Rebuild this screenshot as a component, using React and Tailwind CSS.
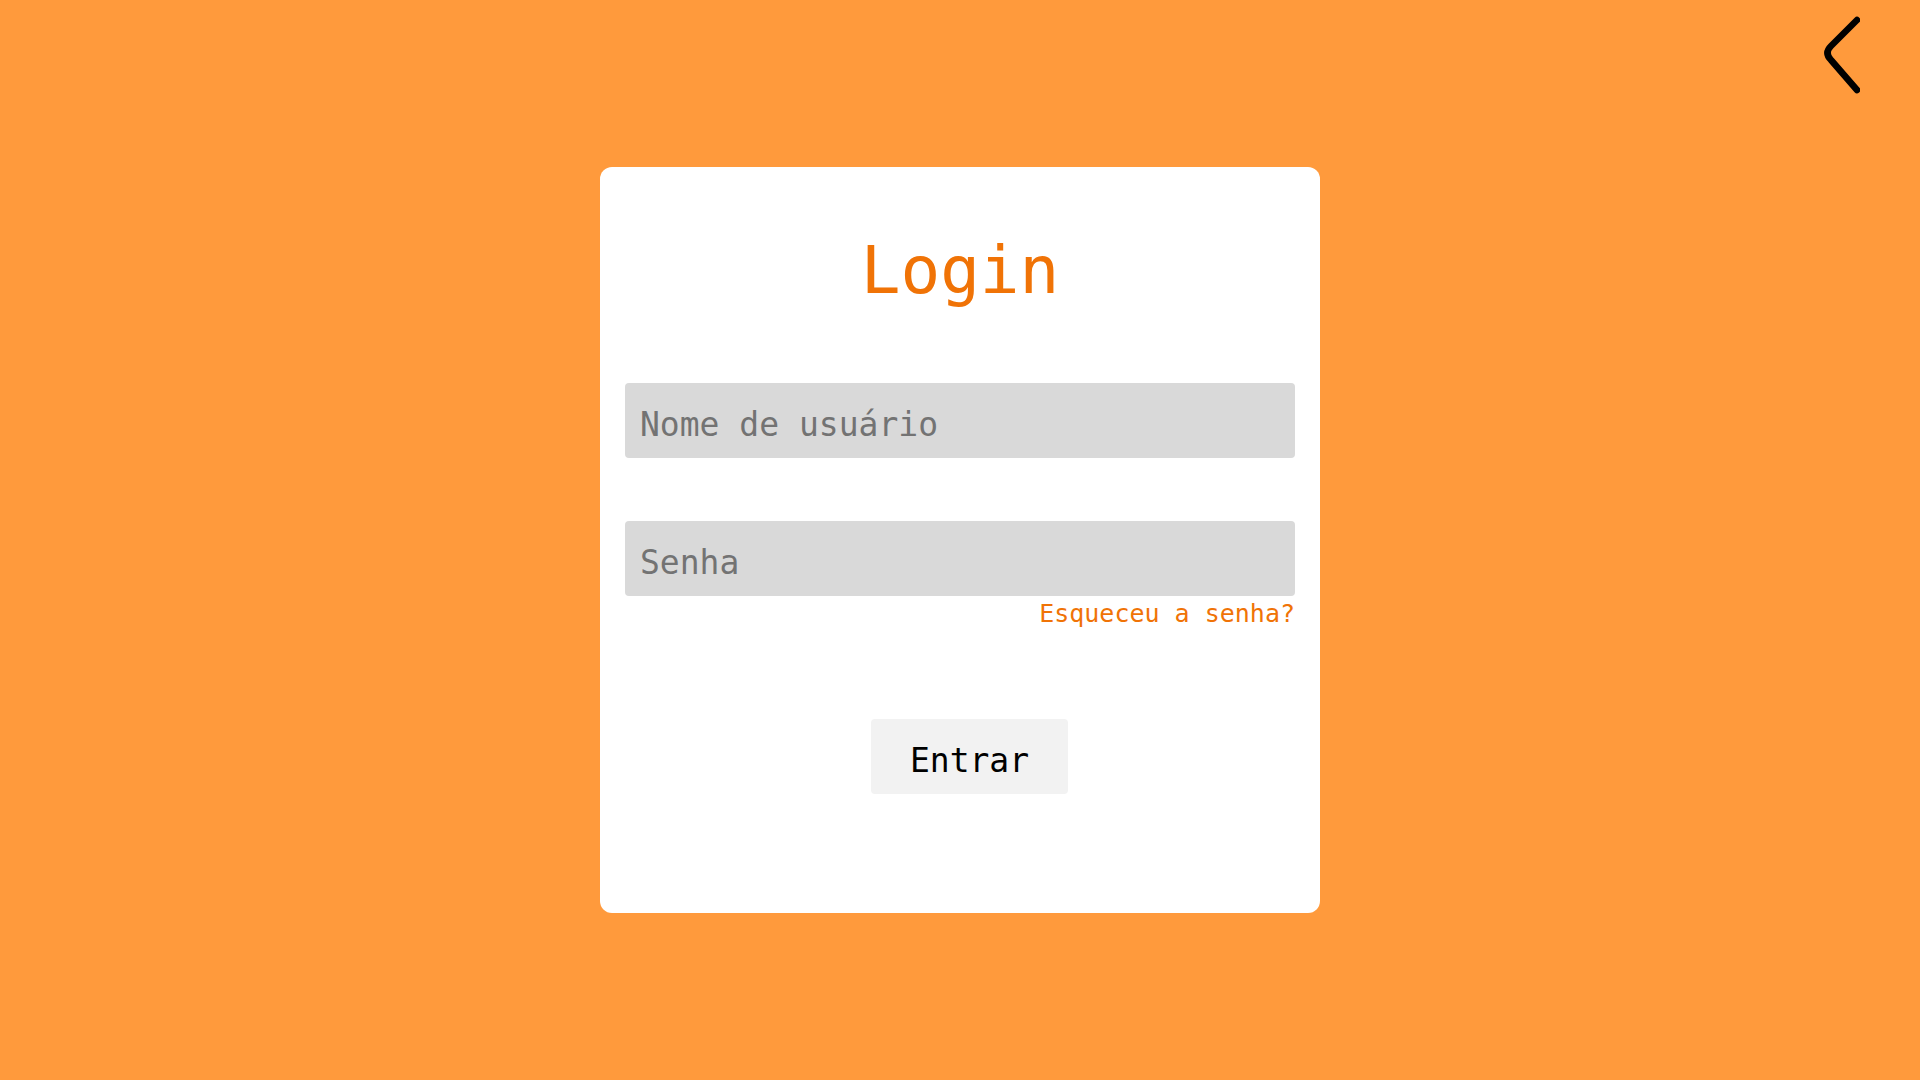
import React from "react";

export default function App() {
  return (
    <div
      className="w-full h-screen bg-[#ff9a3c] flex flex-col overflow-hidden"
      style={{ fontFamily: '"DejaVu Sans Mono", "Liberation Mono", monospace' }}
    >
      <div className="flex justify-end pt-[16px] pr-[60px]">
        <button className="w-[40px] h-[80px] flex items-center justify-center" aria-label="Voltar">
          <svg width="40" height="80" viewBox="0 0 40 80" fill="none">
            <path
              d="M37 4 L11 30 Q4 37 11 44 L37 74"
              stroke="#000"
              strokeWidth="6.5"
              strokeLinecap="round"
              strokeLinejoin="round"
            />
          </svg>
        </button>
      </div>
      <div className="flex justify-center mt-[71px]">
        <div className="w-[720px] h-[746px] bg-white rounded-[12px] px-[25px] pt-[71px] flex flex-col">
          <h1 className="text-[66px] leading-none text-[#f07306] text-center">Login</h1>
          <input
            type="text"
            placeholder="Nome de usuário"
            className="mt-[79px] h-[75px] w-full bg-[#d9d9d9] rounded-[4px] pl-[15px] pt-[8px] text-[33px] text-[#333] placeholder:text-[#737373] outline-none"
          />
          <input
            type="password"
            placeholder="Senha"
            className="mt-[63px] h-[75px] w-full bg-[#d9d9d9] rounded-[4px] pl-[15px] pt-[8px] text-[33px] text-[#333] placeholder:text-[#737373] outline-none"
          />
          <div className="mt-[3px] flex justify-end text-[25px] leading-[29px]">
            <a href="#" className="text-[#f07306]">Esqueceu a senha?</a>
          </div>
          <button className="mt-[91px] self-center ml-[19px] w-[197px] h-[75px] bg-[#f2f2f2] rounded-[4px] pt-[8px] text-[33px] text-black">
            Entrar
          </button>
        </div>
      </div>
    </div>
  );
}
